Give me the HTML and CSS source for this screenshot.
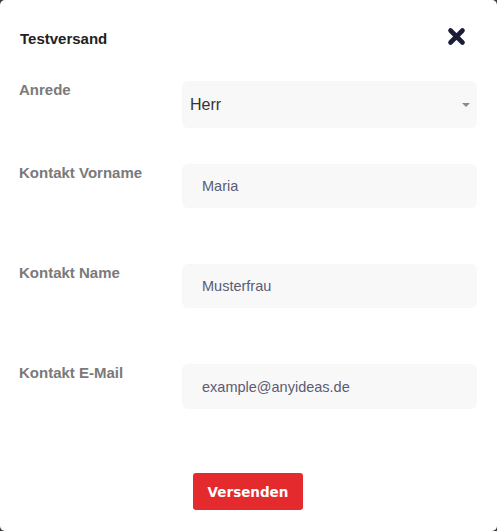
FILE: index.html
```
<!DOCTYPE html>
<html lang="de">

<head>
  <meta charset="UTF-8">
  <meta name="viewport" content="width=device-width, initial-scale=1.0">
  <title>Testversand</title>
  <link rel="stylesheet" href="styles.css">
</head>

<body>
  <div class="modal">
    <div class="modal-header">
      <span class="modal-title">Testversand</span>
      <button class="close-button" aria-label="Schließen">
        <svg width="19" height="19" viewBox="0 0 19 19">
          <path d="M3.5 3.5 L15.5 15.5 M15.5 3.5 L3.5 15.5" stroke="#1b1d38" stroke-width="4.6" stroke-linecap="round" fill="none" />
        </svg>
      </button>
    </div>

    <form class="modal-form">
      <div class="form-row first-row">
        <label class="form-label" for="anrede">Anrede</label>
        <div class="select-wrap">
          <select id="anrede" class="form-select">
            <option>Herr</option>
            <option>Frau</option>
          </select>
          <span class="select-arrow"></span>
        </div>
      </div>

      <div class="form-row">
        <label class="form-label" for="vorname">Kontakt Vorname</label>
        <input type="text" id="vorname" class="form-input" value="Maria">
      </div>

      <div class="form-row">
        <label class="form-label" for="name">Kontakt Name</label>
        <input type="text" id="name" class="form-input" value="Musterfrau">
      </div>

      <div class="form-row">
        <label class="form-label" for="email">Kontakt E-Mail</label>
        <input type="text" id="email" class="form-input" value="example@anyideas.de">
      </div>

      <div class="form-actions">
        <button type="button" class="send-button">Versenden</button>
      </div>
    </form>
  </div>
</body>

</html>
```

FILE: styles.css
```
body {
  margin: 0;
  padding: 0;
  background-color: #3b3b3b;
  font-family: "Liberation Sans", Arial, sans-serif;
}

.modal {
  width: 497px;
  height: 531px;
  background-color: #fff;
  border-radius: 5px;
  box-sizing: border-box;
  padding: 0 20px 0 19px;
}

.modal-header {
  display: flex;
  justify-content: space-between;
  align-items: center;
  padding-top: 27px;
  height: 19px;
}

.modal-title {
  font-size: 15px;
  font-weight: bold;
  color: #222;
  line-height: 18px;
  margin-top: 5px;
  padding-left: 1px;
}

.close-button {
  border: none;
  background: none;
  padding: 0;
  margin-right: 11px;
  width: 19px;
  height: 19px;
  cursor: pointer;
}

.close-button svg {
  display: block;
}

.modal-form {
  display: flex;
  flex-direction: column;
  margin-top: 35px;
}

.form-row {
  display: flex;
  align-items: flex-start;
  margin-bottom: 56px;
}

.first-row {
  margin-bottom: 36px;
}

.form-label {
  width: 163px;
  font-size: 15px;
  font-weight: bold;
  color: #7a7a7a;
  line-height: 17px;
}

.select-wrap {
  position: relative;
  width: 295px;
}

.form-select {
  display: block;
  width: 100%;
  height: 47px;
  border: none;
  border-radius: 6px;
  background-color: #f8f8f8;
  padding: 0 0 0 8px;
  font-family: "Liberation Sans", Arial, sans-serif;
  font-size: 16px;
  color: #333;
  appearance: none;
  -webkit-appearance: none;
  outline: none;
}

.select-arrow {
  position: absolute;
  right: 7px;
  top: 22px;
  width: 0;
  height: 0;
  border-left: 4px solid transparent;
  border-right: 4px solid transparent;
  border-top: 4px solid #8a8a8a;
}

.form-input {
  display: block;
  width: 295px;
  height: 44px;
  box-sizing: border-box;
  border: none;
  border-radius: 6px;
  background-color: #f8f8f8;
  padding: 0 0 0 20px;
  font-family: "Liberation Sans", Arial, sans-serif;
  font-size: 14.5px;
  color: #5b5c74;
  outline: none;
}

.form-row:nth-child(4) .form-input {
  height: 45px;
}

.form-actions {
  display: flex;
  justify-content: center;
  margin-top: 8px;
}

.send-button {
  width: 110px;
  height: 37px;
  border: none;
  border-radius: 3px;
  background-color: #e52a2d;
  color: #fff;
  font-family: "DejaVu Sans", Verdana, sans-serif;
  font-size: 13.5px;
  font-weight: bold;
  cursor: pointer;
}
```
